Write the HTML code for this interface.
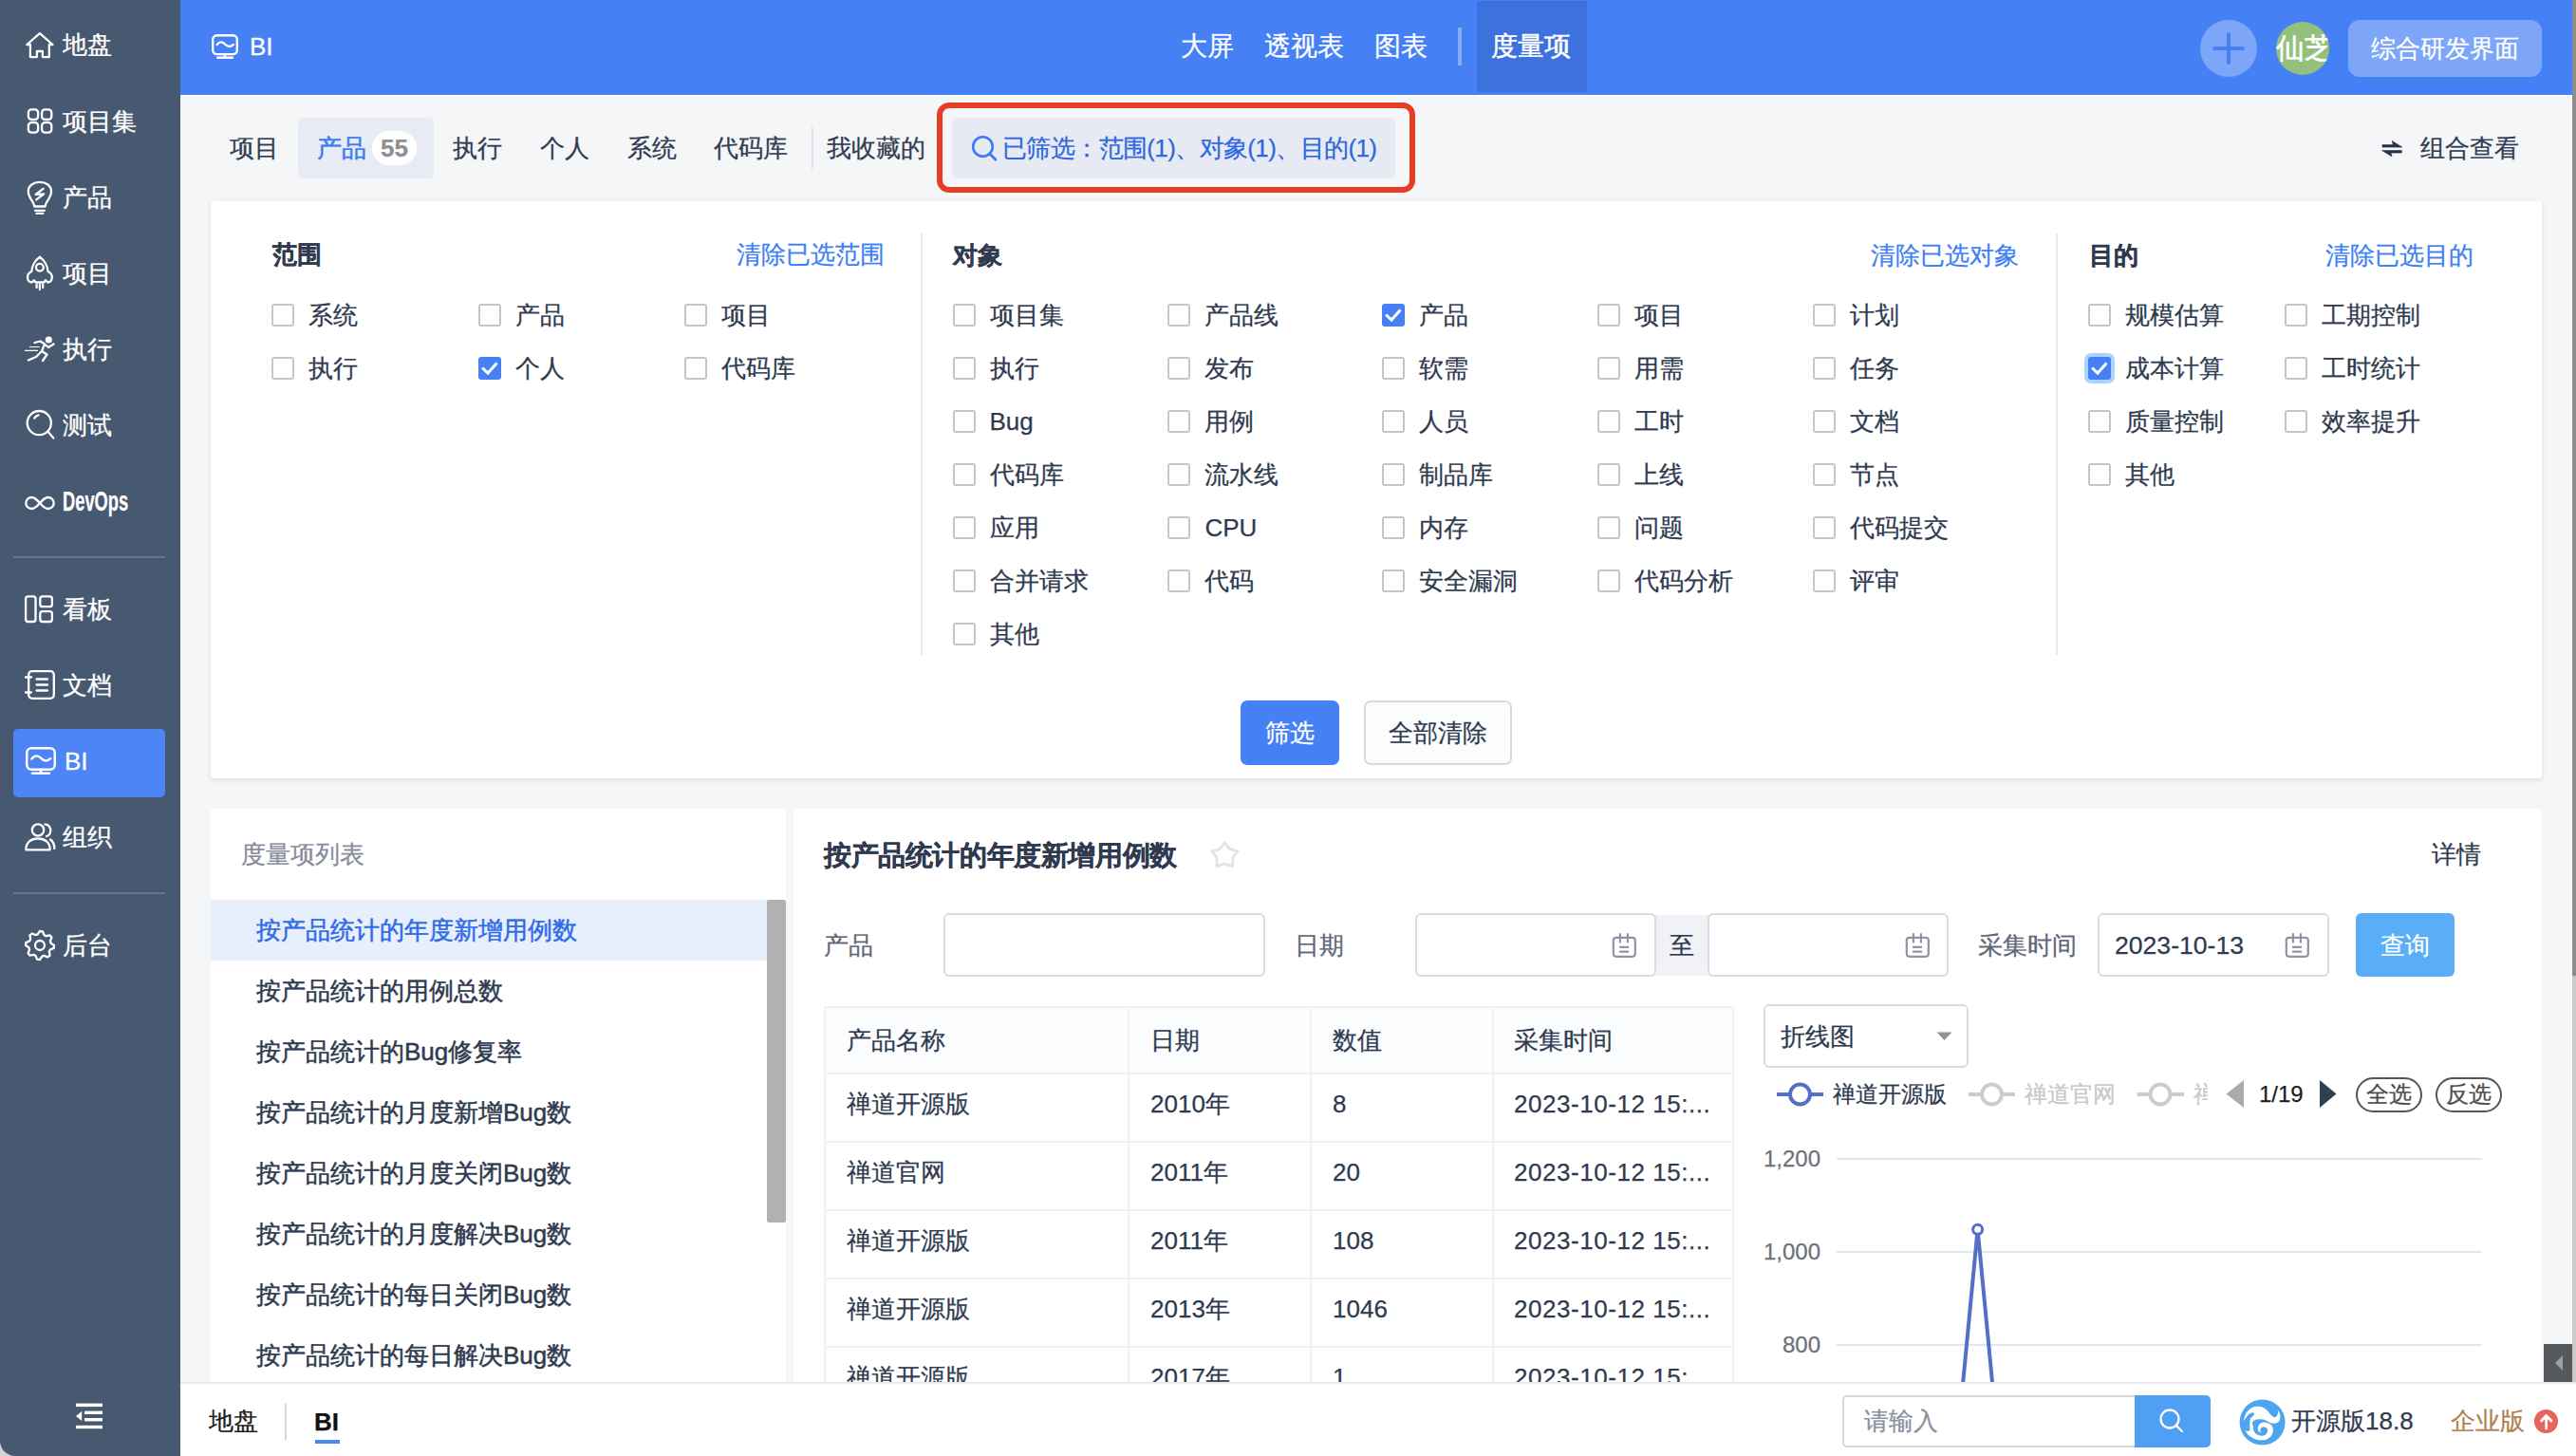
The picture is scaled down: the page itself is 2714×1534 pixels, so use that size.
<!DOCTYPE html><html><head><meta charset="utf-8"><style>
html,body{margin:0;padding:0;}
body{width:2714px;height:1534px;overflow:hidden;position:relative;background:#f5f6f8;font-family:'Liberation Sans', sans-serif;}
.t{position:absolute;white-space:nowrap;-webkit-text-stroke:0.25px currentColor;}
.r{position:absolute;box-sizing:border-box;}
svg{position:absolute;overflow:visible;}
.cb{position:absolute;width:24px;height:24px;box-sizing:border-box;border:2px solid #c6c6c6;border-radius:3px;background:#fff;}
.cbc{position:absolute;width:24px;height:24px;box-sizing:border-box;border-radius:3px;background:#4680f5;}
</style></head><body>
<div class="r" style="left:0px;top:0px;width:190.0px;height:1534.0px;background:#475871;border-bottom-left-radius:16px;"></div>
<div class="r" style="left:0px;top:1510px;width:20.0px;height:24.0px;background:#d4d4d4;z-index:-1;"></div>
<div class="r" style="left:14px;top:768px;width:160.0px;height:72.0px;background:#4d85f7;border-radius:5px;"></div>
<div class="r" style="left:14px;top:586px;width:160.0px;height:2.0px;background:#66758b;"></div>
<div class="r" style="left:14px;top:940px;width:160.0px;height:2.0px;background:#66758b;"></div>
<div class="t" style="left:66px;top:27.4px;font-size:26px;line-height:40px;color:#ffffff;-webkit-text-stroke:0.3px #ffffff;">地盘</div>
<div class="t" style="left:66px;top:108.0px;font-size:26px;line-height:40px;color:#ffffff;-webkit-text-stroke:0.3px #ffffff;">项目集</div>
<div class="t" style="left:66px;top:187.6px;font-size:26px;line-height:40px;color:#ffffff;-webkit-text-stroke:0.3px #ffffff;">产品</div>
<div class="t" style="left:66px;top:267.6px;font-size:26px;line-height:40px;color:#ffffff;-webkit-text-stroke:0.3px #ffffff;">项目</div>
<div class="t" style="left:66px;top:347.7px;font-size:26px;line-height:40px;color:#ffffff;-webkit-text-stroke:0.3px #ffffff;">执行</div>
<div class="t" style="left:66px;top:427.8px;font-size:26px;line-height:40px;color:#ffffff;-webkit-text-stroke:0.3px #ffffff;">测试</div>
<div class="t" style="left:66px;top:621.6px;font-size:26px;line-height:40px;color:#ffffff;-webkit-text-stroke:0.3px #ffffff;">看板</div>
<div class="t" style="left:66px;top:701.7px;font-size:26px;line-height:40px;color:#ffffff;-webkit-text-stroke:0.3px #ffffff;">文档</div>
<div class="t" style="left:66px;top:861.9px;font-size:26px;line-height:40px;color:#ffffff;-webkit-text-stroke:0.3px #ffffff;">组织</div>
<div class="t" style="left:66px;top:975.7px;font-size:26px;line-height:40px;color:#ffffff;-webkit-text-stroke:0.3px #ffffff;">后台</div>
<div class="t" style="left:68px;top:781.5px;font-size:26px;line-height:40px;color:#ffffff;-webkit-text-stroke:0.3px #ffffff;">BI</div>
<div class="t" style="left:66px;top:508px;font-size:30px;line-height:40px;color:#fff;font-weight:bold;transform:scaleX(0.61);transform-origin:0 0;">DevOps</div>
<svg width="190" height="1534" style="left:0;top:0">
<path stroke="#fff" fill="none" stroke-width="2.3" stroke-linecap="round" stroke-linejoin="round" d="M31.9,60.1 V47 H28.3 L41.9,35.2 L55.5,47 H51.8 V60.1 H44.9 V54 H38.9 V60.1 Z"/>
<rect stroke="#fff" fill="none" stroke-width="2.3" stroke-linecap="round" stroke-linejoin="round" stroke-width="1.9" x="29.9" y="115.4" width="10.2" height="10.6" rx="3.3"/>
<rect stroke="#fff" fill="none" stroke-width="2.3" stroke-linecap="round" stroke-linejoin="round" stroke-width="1.9" x="44.1" y="115.4" width="10.2" height="10.6" rx="3.3"/>
<rect stroke="#fff" fill="none" stroke-width="2.3" stroke-linecap="round" stroke-linejoin="round" stroke-width="1.9" x="29.9" y="129.1" width="10.2" height="10.6" rx="3.3"/>
<rect stroke="#fff" fill="none" stroke-width="2.3" stroke-linecap="round" stroke-linejoin="round" stroke-width="1.9" x="44.1" y="129.1" width="10.2" height="10.6" rx="3.3"/>
<path stroke="#fff" fill="none" stroke-width="2.3" stroke-linecap="round" stroke-linejoin="round" d="M36.2,217.5 C36.2,212 29.8,209.5 29.8,201.6 C29.8,195.5 35.3,191.9 41.9,191.9 C48.5,191.9 54,195.5 54,201.6 C54,209.5 47.6,212 47.6,217.5 Z"/>
<path stroke="#fff" fill="none" stroke-width="2.3" stroke-linecap="round" stroke-linejoin="round" stroke-width="2" d="M37,221.8 H46.8 M38.5,224.8 H45.3"/>
<path stroke="#fff" fill="none" stroke-width="2.3" stroke-linecap="round" stroke-linejoin="round" stroke-width="2.2" d="M45.5,198.8 L37.6,204.8 L46.2,204.4 L38.2,210.4"/>
<path stroke="#fff" fill="none" stroke-width="2.3" stroke-linecap="round" stroke-linejoin="round" d="M41.9,270.8 C37.5,274 33.5,280 33.3,286 C30,287.5 29,290 29,292 C29,296 31.5,297.5 33.5,297.5 L35.8,295.2 L37.5,297.5 H46.3 L48,295.2 L50.3,297.5 C52.3,297.5 54.8,296 54.8,292 C54.8,290 53.8,287.5 50.5,286 C50.3,280 46.3,274 41.9,270.8 Z"/>
<circle stroke="#fff" fill="none" stroke-width="2.3" stroke-linecap="round" stroke-linejoin="round" cx="41.9" cy="281.8" r="3.9"/>
<path stroke="#fff" fill="none" stroke-width="2.3" stroke-linecap="round" stroke-linejoin="round" stroke-width="2.1" d="M38.6,300 V303 M41.9,300 V305 M45.2,300 V303"/>
<circle cx="51.3" cy="358" r="3.6" fill="#fff"/>
<path stroke="#fff" fill="none" stroke-width="2.3" stroke-linecap="round" stroke-linejoin="round" stroke-width="2.6" d="M36.5,361 L42.5,359.5 L47,362.5 L44,370 L49.5,373.5 L45,380 M47,362.5 L51,366 L56.5,362.5 M44,370 L38,376 L30,379.5"/>
<path stroke="#fff" stroke-width="1.2" d="M31,365.5 H42 M26,369.3 H40"/>
<circle stroke="#fff" fill="none" stroke-width="2.3" stroke-linecap="round" stroke-linejoin="round" stroke-width="2.6" cx="41.3" cy="445.6" r="12.6"/>
<path stroke="#fff" fill="none" stroke-width="2.3" stroke-linecap="round" stroke-linejoin="round" d="M50.3,454.6 L56.3,461.6"/>
<path stroke="#fff" fill="none" stroke-width="2.3" stroke-linecap="round" stroke-linejoin="round" stroke-width="2" d="M36.3,440.5 A6.5,6.5 0 0 1 40.5,437.3"/>
<path stroke="#fff" fill="none" stroke-width="2.3" stroke-linecap="round" stroke-linejoin="round" stroke-width="2.4" d="M42,530 C38.5,526 36.5,524 33.5,524 C30,524 27.3,526.8 27.3,530 C27.3,533.2 30,536 33.5,536 C36.5,536 38.5,534 42,530 C45.5,526 47.5,524 50.5,524 C54,524 56.7,526.8 56.7,530 C56.7,533.2 54,536 50.5,536 C47.5,536 45.5,534 42,530 Z"/>
<rect stroke="#fff" fill="none" stroke-width="2.3" stroke-linecap="round" stroke-linejoin="round" stroke-width="2.2" x="27.1" y="628.4" width="10.4" height="26.6" rx="2.5"/>
<rect stroke="#fff" fill="none" stroke-width="2.3" stroke-linecap="round" stroke-linejoin="round" stroke-width="2.2" x="42.3" y="628.4" width="12.6" height="10.8" rx="2.5"/>
<rect stroke="#fff" fill="none" stroke-width="2.3" stroke-linecap="round" stroke-linejoin="round" stroke-width="2.2" x="42.3" y="644.2" width="12.6" height="10.8" rx="2.5"/>
<rect stroke="#fff" fill="none" stroke-width="2.3" stroke-linecap="round" stroke-linejoin="round" stroke-width="2.2" x="30.2" y="707.2" width="26.6" height="28.6" rx="3.5"/>
<path stroke="#fff" fill="none" stroke-width="2.3" stroke-linecap="round" stroke-linejoin="round" stroke-width="2.2" d="M38.5,715.5 H50 M38.5,721.5 H50 M38.5,727.5 H50 M27,713.5 H33 M27,729.5 H33"/>
<rect stroke="#fff" fill="none" stroke-width="2.5" x="28.25" y="788.25" width="29.5" height="22.44" rx="4.930000000000001"/>
<path stroke="#fff" fill="none" stroke-width="2.5" stroke-linecap="round" d="M43.0,811.94 V814.75 M34.04,814.75 H51.96"/>
<path stroke="#fff" fill="none" stroke-width="2.375" stroke-linecap="round" d="M33.4,799.47 C36.6,795.12 40.44,795.7 43.0,798.6 C46.2,802.08 50.04,802.08 53.239999999999995,799.1800000000001"/>
<circle stroke="#fff" fill="none" stroke-width="2.3" stroke-linecap="round" stroke-linejoin="round" stroke-width="2.2" cx="40" cy="874.5" r="6.2"/>
<path stroke="#fff" fill="none" stroke-width="2.3" stroke-linecap="round" stroke-linejoin="round" stroke-width="2.2" d="M27.3,895.3 C27.3,887.5 32.8,883.5 40,883.5 C47.2,883.5 52.7,887.5 52.7,895.3 Z"/>
<path stroke="#fff" fill="none" stroke-width="2.3" stroke-linecap="round" stroke-linejoin="round" stroke-width="2.2" d="M47.5,868.5 C51.5,868.8 53.5,872 53.2,875.5 C53,878.5 51,880.5 49,881 M53,884.5 C56,886.5 57.3,890 57.3,894"/>
<path stroke="#fff" fill="none" stroke-width="2.3" stroke-linecap="round" stroke-linejoin="round" stroke-width="2.2" d="M42.00,981.00 L44.93,981.29 L46.52,985.10 L48.56,986.19 L52.61,985.39 L54.47,987.67 L52.90,991.48 L53.57,993.70 L57.00,996.00 L56.71,998.93 L52.90,1000.52 L51.81,1002.56 L52.61,1006.61 L50.33,1008.47 L46.52,1006.90 L44.30,1007.57 L42.00,1011.00 L39.07,1010.71 L37.48,1006.90 L35.44,1005.81 L31.39,1006.61 L29.53,1004.33 L31.10,1000.52 L30.43,998.30 L27.00,996.00 L27.29,993.07 L31.10,991.48 L32.19,989.44 L31.39,985.39 L33.67,983.53 L37.48,985.10 L39.70,984.43 Z"/>
<circle stroke="#fff" fill="none" stroke-width="2.3" stroke-linecap="round" stroke-linejoin="round" stroke-width="2.2" cx="42" cy="996" r="5"/>
<rect x="80" y="1478.6" width="28" height="3.5" fill="#fff"/>
<rect x="89" y="1486.6" width="19" height="3.4" fill="#fff"/>
<rect x="89" y="1494" width="19" height="3.4" fill="#fff"/>
<rect x="80" y="1501.8" width="28" height="3.4" fill="#fff"/>
<path d="M86.2,1486.8 V1497 L80,1491.9 Z" fill="#fff"/>
</svg>
<div class="r" style="left:190px;top:0px;width:2524.0px;height:100.0px;background:#4680f5;"></div>
<div class="r" style="left:190px;top:100px;width:2524.0px;height:1.0px;background:#ffffff;"></div>
<svg width="2714" height="100" style="left:0;top:0">
<rect stroke="#fff" fill="none" stroke-width="2.4" x="224.2" y="37.2" width="25.6" height="19.96" rx="4.42"/>
<path stroke="#fff" fill="none" stroke-width="2.4" stroke-linecap="round" d="M237.0,58.36 V60.8 M229.16,60.8 H244.84"/>
<path stroke="#fff" fill="none" stroke-width="2.28" stroke-linecap="round" d="M228.6,47.18 C231.4,43.28 234.76,43.8 237.0,46.4 C239.8,49.519999999999996 243.16,49.519999999999996 245.96,46.92"/>
</svg>
<div class="t" style="left:263px;top:28.5px;font-size:26px;line-height:40px;color:#fff;-webkit-text-stroke:0.3px #fff;">BI</div>
<div class="t" style="left:1244px;top:29.0px;font-size:28px;line-height:40px;color:#fff;">大屏</div>
<div class="t" style="left:1332px;top:29.0px;font-size:28px;line-height:40px;color:#fff;">透视表</div>
<div class="t" style="left:1448px;top:29.0px;font-size:28px;line-height:40px;color:#fff;">图表</div>
<div class="r" style="left:1536px;top:29px;width:4.0px;height:40.0px;background:rgba(255,255,255,0.35);"></div>
<div class="r" style="left:1556px;top:1px;width:116.0px;height:96.0px;background:#3d71de;"></div>
<div class="t" style="left:1571px;top:29.0px;font-size:28px;line-height:40px;color:#fff;-webkit-text-stroke:0.5px #fff;">度量项</div>
<div class="r" style="left:2318px;top:21px;width:60.0px;height:60.0px;background:rgba(255,255,255,0.3);border-radius:50%;"></div>
<div class="r" style="left:2331px;top:48.9px;width:34.0px;height:4.6px;background:#4680f5;border-radius:2.3px;"></div>
<div class="r" style="left:2345.7px;top:34px;width:4.6px;height:34.4px;background:#4680f5;border-radius:2.3px;"></div>
<div class="r" style="left:2398px;top:23px;width:56px;height:56px;border-radius:50%;background:#93c07a;overflow:hidden;"><div class="t" style="left:0px;top:8px;font-size:30px;line-height:40px;color:#fff;-webkit-text-stroke:0.6px #fff;">仙芝</div></div>
<div class="r" style="left:2474px;top:21px;width:204.0px;height:60.0px;background:rgba(255,255,255,0.3);border-radius:12px;"></div>
<div class="t" style="left:2498px;top:30.6px;font-size:26px;line-height:40px;color:#fff;">综合研发界面</div>
<div class="r" style="left:2710px;top:0px;width:4.0px;height:1029.0px;background:#8c8c8c;border-radius:0 0 2px 2px;"></div>
<div class="r" style="left:2710px;top:1029px;width:4.0px;height:427.0px;background:#cbcbcb;"></div>
<div class="t" style="left:242px;top:135.8px;font-size:26px;line-height:40px;color:#313c52;">项目</div>
<div class="r" style="left:314px;top:124px;width:143.0px;height:64.0px;background:#e8ebf3;border-radius:6px;"></div>
<div class="t" style="left:334px;top:135.8px;font-size:26px;line-height:40px;color:#3b7cf4;-webkit-text-stroke:0.5px #3b7cf4;">产品</div>
<div class="r" style="left:392px;top:138px;width:47.0px;height:36.0px;background:#fff;border-radius:18px;"></div>
<div class="t" style="left:401px;top:136.0px;font-size:26px;line-height:40px;color:#8d8f95;font-weight:bold;">55</div>
<div class="t" style="left:477px;top:135.8px;font-size:26px;line-height:40px;color:#313c52;">执行</div>
<div class="t" style="left:569px;top:135.8px;font-size:26px;line-height:40px;color:#313c52;">个人</div>
<div class="t" style="left:661px;top:135.8px;font-size:26px;line-height:40px;color:#313c52;">系统</div>
<div class="t" style="left:752px;top:135.8px;font-size:26px;line-height:40px;color:#313c52;">代码库</div>
<div class="r" style="left:855px;top:134px;width:2.0px;height:44.0px;background:#dfe2e8;"></div>
<div class="t" style="left:871px;top:135.8px;font-size:26px;line-height:40px;color:#313c52;">我收藏的</div>
<div class="r" style="left:987px;top:108px;width:504.0px;height:95.0px;border:6px solid #e63e25;border-radius:13px;"></div>
<div class="r" style="left:1003px;top:124px;width:467.0px;height:64.0px;background:#e7eaf3;border-radius:5px;"></div>
<svg width="60" height="60" style="left:1020px;top:138px">
<circle cx="15.5" cy="16.5" r="10.3" stroke="#3b7cf4" stroke-width="2.6" fill="none"/><path d="M22.8,24 L29,30.3" stroke="#3b7cf4" stroke-width="2.8" stroke-linecap="round"/>
</svg>
<div class="t" style="left:1056px;top:135.8px;font-size:26px;line-height:40px;color:#2d68e0;letter-spacing:-0.62px;">已筛选：范围(1)、对象(1)、目的(1)</div>
<svg width="40" height="30" style="left:2505px;top:143px">
<path d="M5,9.6 H16.3 L15.2,5.4 L25.8,12.1 H5 Z M25.3,15.6 H4.6 L15,21.9 L14.1,18.1 H25.3 Z" fill="#27324a" stroke="#27324a" stroke-width="0.6" stroke-linejoin="round"/>
</svg>
<div class="t" style="left:2550px;top:135.8px;font-size:26px;line-height:40px;color:#313c52;">组合查看</div>
<div class="r" style="left:222px;top:212px;width:2456.0px;height:608.0px;background:#fff;border-radius:4px;box-shadow:0 2px 6px rgba(0,0,0,0.10);"></div>
<div class="t" style="left:287px;top:247.5px;font-size:26px;line-height:40px;color:#2f3a4f;font-weight:bold;">范围</div>
<div class="t" style="left:776px;top:247.5px;font-size:26px;line-height:40px;color:#3d7ff5;">清除已选范围</div>
<div class="t" style="left:1004px;top:248.5px;font-size:26px;line-height:40px;color:#2f3a4f;font-weight:bold;">对象</div>
<div class="t" style="left:1971px;top:248.5px;font-size:26px;line-height:40px;color:#3d7ff5;">清除已选对象</div>
<div class="t" style="left:2201px;top:248.5px;font-size:26px;line-height:40px;color:#2f3a4f;font-weight:bold;">目的</div>
<div class="t" style="left:2450px;top:248.5px;font-size:26px;line-height:40px;color:#3d7ff5;">清除已选目的</div>
<div class="r" style="left:970px;top:246px;width:2.0px;height:444.0px;background:#e7eaf1;"></div>
<div class="r" style="left:2166px;top:246px;width:2.0px;height:444.0px;background:#e7eaf1;"></div>
<div class="cb" style="left:286.4px;top:320.1px;"></div>
<div class="t" style="left:325.4px;top:312.1px;font-size:26px;line-height:40px;color:#2f3a4f;">系统</div>
<div class="cb" style="left:504.3px;top:320.1px;"></div>
<div class="t" style="left:543.3px;top:312.1px;font-size:26px;line-height:40px;color:#2f3a4f;">产品</div>
<div class="cb" style="left:721.4px;top:320.1px;"></div>
<div class="t" style="left:760.4px;top:312.1px;font-size:26px;line-height:40px;color:#2f3a4f;">项目</div>
<div class="cb" style="left:286.4px;top:375.7px;"></div>
<div class="t" style="left:325.4px;top:367.7px;font-size:26px;line-height:40px;color:#2f3a4f;">执行</div>
<div class="cbc" style="left:504.3px;top:375.7px;"></div>
<svg width="24" height="24" style="left:504.3px;top:375.7px"><path d="M5.2,12.5 L10,17 L18.5,7.5" stroke="#fff" stroke-width="3" fill="none" stroke-linecap="square"/></svg>
<div class="t" style="left:543.3px;top:367.7px;font-size:26px;line-height:40px;color:#2f3a4f;">个人</div>
<div class="cb" style="left:721.4px;top:375.7px;"></div>
<div class="t" style="left:760.4px;top:367.7px;font-size:26px;line-height:40px;color:#2f3a4f;">代码库</div>
<div class="cb" style="left:1003.5px;top:320.1px;"></div>
<div class="t" style="left:1042.5px;top:312.1px;font-size:26px;line-height:40px;color:#2f3a4f;">项目集</div>
<div class="cb" style="left:1230.4px;top:320.1px;"></div>
<div class="t" style="left:1269.4px;top:312.1px;font-size:26px;line-height:40px;color:#2f3a4f;">产品线</div>
<div class="cbc" style="left:1456.2px;top:320.1px;"></div>
<svg width="24" height="24" style="left:1456.2px;top:320.1px"><path d="M5.2,12.5 L10,17 L18.5,7.5" stroke="#fff" stroke-width="3" fill="none" stroke-linecap="square"/></svg>
<div class="t" style="left:1495.2px;top:312.1px;font-size:26px;line-height:40px;color:#2f3a4f;">产品</div>
<div class="cb" style="left:1683.3px;top:320.1px;"></div>
<div class="t" style="left:1722.3px;top:312.1px;font-size:26px;line-height:40px;color:#2f3a4f;">项目</div>
<div class="cb" style="left:1909.6px;top:320.1px;"></div>
<div class="t" style="left:1948.6px;top:312.1px;font-size:26px;line-height:40px;color:#2f3a4f;">计划</div>
<div class="cb" style="left:1003.5px;top:376.2px;"></div>
<div class="t" style="left:1042.5px;top:368.2px;font-size:26px;line-height:40px;color:#2f3a4f;">执行</div>
<div class="cb" style="left:1230.4px;top:376.2px;"></div>
<div class="t" style="left:1269.4px;top:368.2px;font-size:26px;line-height:40px;color:#2f3a4f;">发布</div>
<div class="cb" style="left:1456.2px;top:376.2px;"></div>
<div class="t" style="left:1495.2px;top:368.2px;font-size:26px;line-height:40px;color:#2f3a4f;">软需</div>
<div class="cb" style="left:1683.3px;top:376.2px;"></div>
<div class="t" style="left:1722.3px;top:368.2px;font-size:26px;line-height:40px;color:#2f3a4f;">用需</div>
<div class="cb" style="left:1909.6px;top:376.2px;"></div>
<div class="t" style="left:1948.6px;top:368.2px;font-size:26px;line-height:40px;color:#2f3a4f;">任务</div>
<div class="cb" style="left:1003.5px;top:432.2px;"></div>
<div class="t" style="left:1042.5px;top:424.2px;font-size:26px;line-height:40px;color:#2f3a4f;">Bug</div>
<div class="cb" style="left:1230.4px;top:432.2px;"></div>
<div class="t" style="left:1269.4px;top:424.2px;font-size:26px;line-height:40px;color:#2f3a4f;">用例</div>
<div class="cb" style="left:1456.2px;top:432.2px;"></div>
<div class="t" style="left:1495.2px;top:424.2px;font-size:26px;line-height:40px;color:#2f3a4f;">人员</div>
<div class="cb" style="left:1683.3px;top:432.2px;"></div>
<div class="t" style="left:1722.3px;top:424.2px;font-size:26px;line-height:40px;color:#2f3a4f;">工时</div>
<div class="cb" style="left:1909.6px;top:432.2px;"></div>
<div class="t" style="left:1948.6px;top:424.2px;font-size:26px;line-height:40px;color:#2f3a4f;">文档</div>
<div class="cb" style="left:1003.5px;top:488.2px;"></div>
<div class="t" style="left:1042.5px;top:480.2px;font-size:26px;line-height:40px;color:#2f3a4f;">代码库</div>
<div class="cb" style="left:1230.4px;top:488.2px;"></div>
<div class="t" style="left:1269.4px;top:480.2px;font-size:26px;line-height:40px;color:#2f3a4f;">流水线</div>
<div class="cb" style="left:1456.2px;top:488.2px;"></div>
<div class="t" style="left:1495.2px;top:480.2px;font-size:26px;line-height:40px;color:#2f3a4f;">制品库</div>
<div class="cb" style="left:1683.3px;top:488.2px;"></div>
<div class="t" style="left:1722.3px;top:480.2px;font-size:26px;line-height:40px;color:#2f3a4f;">上线</div>
<div class="cb" style="left:1909.6px;top:488.2px;"></div>
<div class="t" style="left:1948.6px;top:480.2px;font-size:26px;line-height:40px;color:#2f3a4f;">节点</div>
<div class="cb" style="left:1003.5px;top:544.3px;"></div>
<div class="t" style="left:1042.5px;top:536.3px;font-size:26px;line-height:40px;color:#2f3a4f;">应用</div>
<div class="cb" style="left:1230.4px;top:544.3px;"></div>
<div class="t" style="left:1269.4px;top:536.3px;font-size:26px;line-height:40px;color:#2f3a4f;">CPU</div>
<div class="cb" style="left:1456.2px;top:544.3px;"></div>
<div class="t" style="left:1495.2px;top:536.3px;font-size:26px;line-height:40px;color:#2f3a4f;">内存</div>
<div class="cb" style="left:1683.3px;top:544.3px;"></div>
<div class="t" style="left:1722.3px;top:536.3px;font-size:26px;line-height:40px;color:#2f3a4f;">问题</div>
<div class="cb" style="left:1909.6px;top:544.3px;"></div>
<div class="t" style="left:1948.6px;top:536.3px;font-size:26px;line-height:40px;color:#2f3a4f;">代码提交</div>
<div class="cb" style="left:1003.5px;top:600.4px;"></div>
<div class="t" style="left:1042.5px;top:592.4px;font-size:26px;line-height:40px;color:#2f3a4f;">合并请求</div>
<div class="cb" style="left:1230.4px;top:600.4px;"></div>
<div class="t" style="left:1269.4px;top:592.4px;font-size:26px;line-height:40px;color:#2f3a4f;">代码</div>
<div class="cb" style="left:1456.2px;top:600.4px;"></div>
<div class="t" style="left:1495.2px;top:592.4px;font-size:26px;line-height:40px;color:#2f3a4f;">安全漏洞</div>
<div class="cb" style="left:1683.3px;top:600.4px;"></div>
<div class="t" style="left:1722.3px;top:592.4px;font-size:26px;line-height:40px;color:#2f3a4f;">代码分析</div>
<div class="cb" style="left:1909.6px;top:600.4px;"></div>
<div class="t" style="left:1948.6px;top:592.4px;font-size:26px;line-height:40px;color:#2f3a4f;">评审</div>
<div class="cb" style="left:1003.5px;top:656.4px;"></div>
<div class="t" style="left:1042.5px;top:648.4px;font-size:26px;line-height:40px;color:#2f3a4f;">其他</div>
<div class="cb" style="left:2200px;top:320.1px;"></div>
<div class="t" style="left:2239px;top:312.1px;font-size:26px;line-height:40px;color:#2f3a4f;">规模估算</div>
<div class="cb" style="left:2406.5px;top:320.1px;"></div>
<div class="t" style="left:2445.5px;top:312.1px;font-size:26px;line-height:40px;color:#2f3a4f;">工期控制</div>
<div class="r" style="left:2196px;top:372.15000000000003px;width:32.0px;height:32.0px;background:#a9d3fa;border-radius:7px;"></div>
<div class="cbc" style="left:2200px;top:376.2px;"></div>
<svg width="24" height="24" style="left:2200px;top:376.2px"><path d="M5.2,12.5 L10,17 L18.5,7.5" stroke="#fff" stroke-width="3" fill="none" stroke-linecap="square"/></svg>
<div class="t" style="left:2239px;top:368.2px;font-size:26px;line-height:40px;color:#2f3a4f;">成本计算</div>
<div class="cb" style="left:2406.5px;top:376.2px;"></div>
<div class="t" style="left:2445.5px;top:368.2px;font-size:26px;line-height:40px;color:#2f3a4f;">工时统计</div>
<div class="cb" style="left:2200px;top:432.2px;"></div>
<div class="t" style="left:2239px;top:424.2px;font-size:26px;line-height:40px;color:#2f3a4f;">质量控制</div>
<div class="cb" style="left:2406.5px;top:432.2px;"></div>
<div class="t" style="left:2445.5px;top:424.2px;font-size:26px;line-height:40px;color:#2f3a4f;">效率提升</div>
<div class="cb" style="left:2200px;top:488.2px;"></div>
<div class="t" style="left:2239px;top:480.2px;font-size:26px;line-height:40px;color:#2f3a4f;">其他</div>
<div class="r" style="left:1307px;top:738px;width:104.0px;height:68.0px;background:#4680f5;border-radius:7px;"></div>
<div class="t" style="left:1333px;top:752.0px;font-size:26px;line-height:40px;color:#fff;">筛选</div>
<div class="r" style="left:1437px;top:738px;width:156.0px;height:68.0px;background:#fbfcfd;border:2px solid #d7d9de;border-radius:7px;"></div>
<div class="t" style="left:1463px;top:752.0px;font-size:26px;line-height:40px;color:#2f3a4f;">全部清除</div>
<div class="r" style="left:222px;top:852px;width:606.0px;height:604.0px;background:#fff;border-radius:4px 4px 0 0;"></div>
<div class="t" style="left:254px;top:880.0px;font-size:26px;line-height:40px;color:#878c99;">度量项列表</div>
<div class="r" style="left:222px;top:948px;width:586.0px;height:64.0px;background:#e8effc;"></div>
<div class="t" style="left:270px;top:960.0px;font-size:26px;line-height:40px;color:#2f6be6;-webkit-text-stroke:0.5px #2f6be6;">按产品统计的年度新增用例数</div>
<div class="t" style="left:270px;top:1024.0px;font-size:26px;line-height:40px;color:#2f3a4f;-webkit-text-stroke:0.5px #2f3a4f;">按产品统计的用例总数</div>
<div class="t" style="left:270px;top:1088.0px;font-size:26px;line-height:40px;color:#2f3a4f;-webkit-text-stroke:0.5px #2f3a4f;">按产品统计的Bug修复率</div>
<div class="t" style="left:270px;top:1152.0px;font-size:26px;line-height:40px;color:#2f3a4f;-webkit-text-stroke:0.5px #2f3a4f;">按产品统计的月度新增Bug数</div>
<div class="t" style="left:270px;top:1216.0px;font-size:26px;line-height:40px;color:#2f3a4f;-webkit-text-stroke:0.5px #2f3a4f;">按产品统计的月度关闭Bug数</div>
<div class="t" style="left:270px;top:1280.0px;font-size:26px;line-height:40px;color:#2f3a4f;-webkit-text-stroke:0.5px #2f3a4f;">按产品统计的月度解决Bug数</div>
<div class="t" style="left:270px;top:1344.0px;font-size:26px;line-height:40px;color:#2f3a4f;-webkit-text-stroke:0.5px #2f3a4f;">按产品统计的每日关闭Bug数</div>
<div class="t" style="left:270px;top:1408.0px;font-size:26px;line-height:40px;color:#2f3a4f;-webkit-text-stroke:0.5px #2f3a4f;">按产品统计的每日解决Bug数</div>
<div class="r" style="left:808px;top:948px;width:20.0px;height:340.0px;background:#b1b1b1;border-radius:2px;"></div>
<div class="r" style="left:836px;top:852px;width:1842.0px;height:604.0px;background:#fff;border-radius:4px 4px 0 0;"></div>
<div class="t" style="left:868px;top:880.6px;font-size:29px;line-height:40px;color:#2f3a4f;font-weight:bold;letter-spacing:-0.4px;">按产品统计的年度新增用例数</div>
<svg width="40" height="40" style="left:1270px;top:880px">
<path d="M20.4,7.7 L25.4,14.4 L33.8,17 L28.7,23.8 L28.7,32.8 L20.4,30 L12.1,32.8 L12.1,23.8 L7,17 L15.4,14.4 Z" stroke="#e0e2e7" stroke-width="2.7" fill="none" stroke-linejoin="round"/>
</svg>
<div class="t" style="left:2562px;top:880.0px;font-size:26px;line-height:40px;color:#2f3a4f;">详情</div>
<div class="t" style="left:868px;top:976.0px;font-size:26px;line-height:40px;color:#5f6676;">产品</div>
<div class="r" style="left:994px;top:962px;width:339.0px;height:67.0px;border:2px solid #d8dbe2;border-radius:6px;background:#fff;"></div>
<div class="t" style="left:1364px;top:976.0px;font-size:26px;line-height:40px;color:#5f6676;">日期</div>
<div class="r" style="left:1744px;top:964px;width:56.0px;height:64.0px;background:#f1f2f5;"></div>
<div class="r" style="left:1491px;top:962px;width:254.0px;height:67.0px;border:2px solid #d8dbe2;border-radius:6px;background:#fff;"></div>
<div class="t" style="left:1759px;top:976.0px;font-size:26px;line-height:40px;color:#2f3a4f;">至</div>
<div class="r" style="left:1799px;top:962px;width:254.0px;height:67.0px;border:2px solid #d8dbe2;border-radius:6px;background:#fff;"></div>
<div class="t" style="left:2084px;top:976.0px;font-size:26px;line-height:40px;color:#5f6676;">采集时间</div>
<div class="r" style="left:2210px;top:962px;width:244.0px;height:67.0px;border:2px solid #d8dbe2;border-radius:6px;background:#fff;"></div>
<div class="t" style="left:2228px;top:976.0px;font-size:26.6px;line-height:40px;color:#2f3a4f;">2023-10-13</div>
<svg width="30" height="30" style="left:1697px;top:983px">
<rect x="2.8" y="4.9" width="23" height="19.9" rx="3" stroke="#8f95a2" stroke-width="2.2" fill="none"/><path d="M9.9,1.2 V9.6 M17.9,1.2 V9.6 M9.9,14.8 H18.3 M9.9,19.7 H18.3" stroke="#8f95a2" stroke-width="2.2" fill="none" stroke-linecap="round"/>
</svg>
<svg width="30" height="30" style="left:2006px;top:983px">
<rect x="2.8" y="4.9" width="23" height="19.9" rx="3" stroke="#8f95a2" stroke-width="2.2" fill="none"/><path d="M9.9,1.2 V9.6 M17.9,1.2 V9.6 M9.9,14.8 H18.3 M9.9,19.7 H18.3" stroke="#8f95a2" stroke-width="2.2" fill="none" stroke-linecap="round"/>
</svg>
<svg width="30" height="30" style="left:2406px;top:983px">
<rect x="2.8" y="4.9" width="23" height="19.9" rx="3" stroke="#8f95a2" stroke-width="2.2" fill="none"/><path d="M9.9,1.2 V9.6 M17.9,1.2 V9.6 M9.9,14.8 H18.3 M9.9,19.7 H18.3" stroke="#8f95a2" stroke-width="2.2" fill="none" stroke-linecap="round"/>
</svg>
<div class="r" style="left:2482px;top:962px;width:104.0px;height:67.0px;background:#5aaef7;border-radius:6px;"></div>
<div class="t" style="left:2508px;top:976.0px;font-size:26px;line-height:40px;color:#fff;">查询</div>
<div class="r" style="left:868px;top:1060px;width:959.0px;height:400.0px;border:2px solid #eff1f5;border-bottom:none;background:#fff;"></div>
<div class="r" style="left:870px;top:1062px;width:955.0px;height:68.0px;background:#fbfcfe;"></div>
<div class="r" style="left:868px;top:1130px;width:959.0px;height:2.0px;background:#eff1f5;"></div>
<div class="r" style="left:868px;top:1202px;width:959.0px;height:2.0px;background:#eff1f5;"></div>
<div class="r" style="left:868px;top:1274px;width:959.0px;height:2.0px;background:#eff1f5;"></div>
<div class="r" style="left:868px;top:1346px;width:959.0px;height:2.0px;background:#eff1f5;"></div>
<div class="r" style="left:868px;top:1418px;width:959.0px;height:2.0px;background:#eff1f5;"></div>
<div class="r" style="left:1188px;top:1060px;width:2.0px;height:400.0px;background:#eff1f5;"></div>
<div class="r" style="left:1380px;top:1060px;width:2.0px;height:400.0px;background:#eff1f5;"></div>
<div class="r" style="left:1572px;top:1060px;width:2.0px;height:400.0px;background:#eff1f5;"></div>
<div class="t" style="left:892px;top:1076.0px;font-size:26px;line-height:40px;color:#2f3a4f;">产品名称</div>
<div class="t" style="left:1212px;top:1076.0px;font-size:26px;line-height:40px;color:#2f3a4f;">日期</div>
<div class="t" style="left:1404px;top:1076.0px;font-size:26px;line-height:40px;color:#2f3a4f;">数值</div>
<div class="t" style="left:1595px;top:1076.0px;font-size:26px;line-height:40px;color:#2f3a4f;">采集时间</div>
<div class="t" style="left:892px;top:1143.0px;font-size:26px;line-height:40px;color:#2f3a4f;">禅道开源版</div>
<div class="t" style="left:1212px;top:1143.0px;font-size:26px;line-height:40px;color:#2f3a4f;">2010年</div>
<div class="t" style="left:1404px;top:1143.0px;font-size:26px;line-height:40px;color:#2f3a4f;">8</div>
<div class="t" style="left:1595px;top:1143.0px;font-size:26px;line-height:40px;color:#2f3a4f;letter-spacing:0.55px;">2023-10-12 15:...</div>
<div class="t" style="left:892px;top:1215.0px;font-size:26px;line-height:40px;color:#2f3a4f;">禅道官网</div>
<div class="t" style="left:1212px;top:1215.0px;font-size:26px;line-height:40px;color:#2f3a4f;">2011年</div>
<div class="t" style="left:1404px;top:1215.0px;font-size:26px;line-height:40px;color:#2f3a4f;">20</div>
<div class="t" style="left:1595px;top:1215.0px;font-size:26px;line-height:40px;color:#2f3a4f;letter-spacing:0.55px;">2023-10-12 15:...</div>
<div class="t" style="left:892px;top:1287.0px;font-size:26px;line-height:40px;color:#2f3a4f;">禅道开源版</div>
<div class="t" style="left:1212px;top:1287.0px;font-size:26px;line-height:40px;color:#2f3a4f;">2011年</div>
<div class="t" style="left:1404px;top:1287.0px;font-size:26px;line-height:40px;color:#2f3a4f;">108</div>
<div class="t" style="left:1595px;top:1287.0px;font-size:26px;line-height:40px;color:#2f3a4f;letter-spacing:0.55px;">2023-10-12 15:...</div>
<div class="t" style="left:892px;top:1359.0px;font-size:26px;line-height:40px;color:#2f3a4f;">禅道开源版</div>
<div class="t" style="left:1212px;top:1359.0px;font-size:26px;line-height:40px;color:#2f3a4f;">2013年</div>
<div class="t" style="left:1404px;top:1359.0px;font-size:26px;line-height:40px;color:#2f3a4f;">1046</div>
<div class="t" style="left:1595px;top:1359.0px;font-size:26px;line-height:40px;color:#2f3a4f;letter-spacing:0.55px;">2023-10-12 15:...</div>
<div class="t" style="left:892px;top:1431.0px;font-size:26px;line-height:40px;color:#2f3a4f;">禅道开源版</div>
<div class="t" style="left:1212px;top:1431.0px;font-size:26px;line-height:40px;color:#2f3a4f;">2017年</div>
<div class="t" style="left:1404px;top:1431.0px;font-size:26px;line-height:40px;color:#2f3a4f;">1</div>
<div class="t" style="left:1595px;top:1431.0px;font-size:26px;line-height:40px;color:#2f3a4f;letter-spacing:0.55px;">2023-10-12 15:...</div>
<div class="r" style="left:1858px;top:1058px;width:216.0px;height:67.0px;border:2px solid #d8dbe2;border-radius:6px;background:#fff;"></div>
<div class="t" style="left:1876px;top:1072.0px;font-size:26px;line-height:40px;color:#2f3a4f;">折线图</div>
<svg width="20" height="12" style="left:2040px;top:1087px"><path d="M0.5,0.5 H16.5 L8.5,9 Z" fill="#8e93a0"/></svg>
<svg width="900" height="60" style="left:1860px;top:1123px">
<path d="M12,30 H61" stroke="#5470c6" stroke-width="4"/><circle cx="36.5" cy="30" r="10.5" fill="#fff" stroke="#5470c6" stroke-width="4"/>
<path d="M214,30 H263" stroke="#cccccc" stroke-width="4"/><circle cx="238.5" cy="30" r="10.5" fill="#fff" stroke="#cccccc" stroke-width="4"/>
<path d="M391.5,30 H441" stroke="#cccccc" stroke-width="4"/><circle cx="416" cy="30" r="10.5" fill="#fff" stroke="#cccccc" stroke-width="4"/>
<path d="M504,15 V44 L485.5,29.5 Z" fill="#aaaaaa"/>
<path d="M584,15 V44 L601.5,29.5 Z" fill="#2f4050"/>
</svg>
<div class="t" style="left:1931px;top:1133.0px;font-size:24px;line-height:40px;color:#2f3a4f;">禅道开源版</div>
<div class="t" style="left:2133px;top:1133.0px;font-size:24px;line-height:40px;color:#c8c8c8;">禅道官网</div>
<div class="r" style="left:2311px;top:1133px;width:15px;height:40px;overflow:hidden;"><div class="t" style="left:0;top:0;font-size:24px;line-height:40px;color:#c8c8c8;">禅</div></div>
<div class="t" style="left:2380px;top:1133.0px;font-size:24px;line-height:40px;color:#222;">1/19</div>
<div class="r" style="left:2482px;top:1134.5px;width:70.0px;height:37.0px;border:2px solid #555;border-radius:19px;"></div>
<div class="t" style="left:2493px;top:1133.0px;font-size:24px;line-height:40px;color:#4b4b4b;">全选</div>
<div class="r" style="left:2566px;top:1134.5px;width:70.0px;height:37.0px;border:2px solid #555;border-radius:19px;"></div>
<div class="t" style="left:2577px;top:1133.0px;font-size:24px;line-height:40px;color:#4b4b4b;">反选</div>
<div class="r" style="left:1935px;top:1219.7px;width:680.0px;height:2.0px;background:#e0e6f1;"></div>
<div class="t" style="left:1700px;width:218px;text-align:right;top:1200.7px;font-size:24px;line-height:40px;color:#6e7079;">1,200</div>
<div class="r" style="left:1935px;top:1317.7px;width:680.0px;height:2.0px;background:#e0e6f1;"></div>
<div class="t" style="left:1700px;width:218px;text-align:right;top:1298.7px;font-size:24px;line-height:40px;color:#6e7079;">1,000</div>
<div class="r" style="left:1935px;top:1415.5px;width:680.0px;height:2.0px;background:#e0e6f1;"></div>
<div class="t" style="left:1700px;width:218px;text-align:right;top:1396.5px;font-size:24px;line-height:40px;color:#6e7079;">800</div>
<svg width="2714" height="1534" style="left:0;top:0;pointer-events:none">
<defs><clipPath id="cc"><rect x="1850" y="1180" width="800" height="276"/></clipPath></defs>
<g clip-path="url(#cc)"><path d="M2034.6,1808 L2083.6,1295.3 L2132.6,1808" stroke="#5470c6" stroke-width="4" fill="none" stroke-linejoin="round"/>
<circle cx="2083.6" cy="1295.3" r="5" fill="#fff" stroke="#5470c6" stroke-width="3"/></g>
</svg>
<div class="r" style="left:2680px;top:1416px;width:30.0px;height:40.0px;background:#55585d;"></div>
<svg width="30" height="40" style="left:2680px;top:1416px"><path d="M20,12 V28 L12,20 Z" fill="#a0a0a0"/></svg>
<div class="r" style="left:190px;top:1456px;width:2524.0px;height:78.0px;background:#fff;"></div>
<div class="r" style="left:190px;top:1456px;width:2524.0px;height:2.0px;background:#e8eaef;"></div>
<div class="t" style="left:220px;top:1477.0px;font-size:26px;line-height:40px;color:#1c1c1c;">地盘</div>
<div class="r" style="left:300px;top:1479px;width:2.0px;height:38.0px;background:#d6d6d6;"></div>
<div class="t" style="left:331px;top:1477.5px;font-size:26px;line-height:40px;color:#111;font-weight:bold;">BI</div>
<div class="r" style="left:332px;top:1517px;width:26.0px;height:4.0px;background:#3f8cf3;"></div>
<div class="r" style="left:1941px;top:1470px;width:310.0px;height:55.0px;border:2px solid #d6d8dd;border-radius:5px 0 0 5px;background:#fff;"></div>
<div class="r" style="left:2249px;top:1470px;width:80.0px;height:55.0px;background:#4f9ff5;border-radius:0 5px 5px 0;"></div>
<svg width="40" height="40" style="left:2269px;top:1477px"><circle cx="17" cy="18" r="9.5" stroke="#fff" stroke-width="2.3" fill="none"/><path d="M24,25 L30,31" stroke="#fff" stroke-width="2.3" stroke-linecap="round"/></svg>
<div class="t" style="left:1964px;top:1477.0px;font-size:26px;line-height:40px;color:#8a90a0;">请输入</div>
<svg width="57" height="57" viewBox="0 0 1456 1456" style="left:2355px;top:1470px">
<circle cx="730" cy="728" r="613" fill="#4ea4ee"/>
<path fill="#fff" d="M232,700 C236,500 380,300 600,300 C800,300 880,430 960,530 C1040,620 1140,640 1160,410 C1240,540 1250,740 1060,760 C940,770 860,690 780,660 C700,640 560,630 470,700 L420,620 C470,560 520,530 510,490 C490,450 420,460 360,520 C290,590 250,660 232,700 Z"/>
<path fill="#fff" d="M262,930 C300,960 360,990 400,940 C410,900 380,800 420,690 L470,700 C430,760 480,800 480,860 C480,990 580,1090 720,1090 C840,1090 880,990 860,920 C840,850 770,840 720,870 C680,900 680,980 720,1020 C620,1000 600,930 610,870 C630,760 720,720 800,730 C940,750 1030,830 1020,950 C1010,1100 880,1210 720,1210 C520,1210 340,1110 262,930 Z"/>
<path fill="#fff" d="M410,610 C440,600 490,620 530,640 L470,710 C440,760 470,800 480,860 L400,930 C390,800 385,700 410,610 Z"/>
<circle cx="770" cy="950" r="95" fill="#4ea4ee"/>
</svg>
<div class="t" style="left:2414px;top:1477.0px;font-size:26px;line-height:40px;color:#2f3a4f;">开源版18.8</div>
<div class="t" style="left:2582px;top:1477.0px;font-size:26px;line-height:40px;color:#b0804c;">企业版</div>
<div class="r" style="left:2669.5px;top:1485px;width:25.5px;height:25.0px;background:#e8635c;border-radius:50%;"></div>
<svg width="26" height="26" style="left:2669.5px;top:1485px"><path d="M12.7,20 V7 M7.5,12 L12.7,6.5 L18,12" stroke="#fff" stroke-width="2.8" fill="none" stroke-linecap="round" stroke-linejoin="round"/></svg>
</body></html>
